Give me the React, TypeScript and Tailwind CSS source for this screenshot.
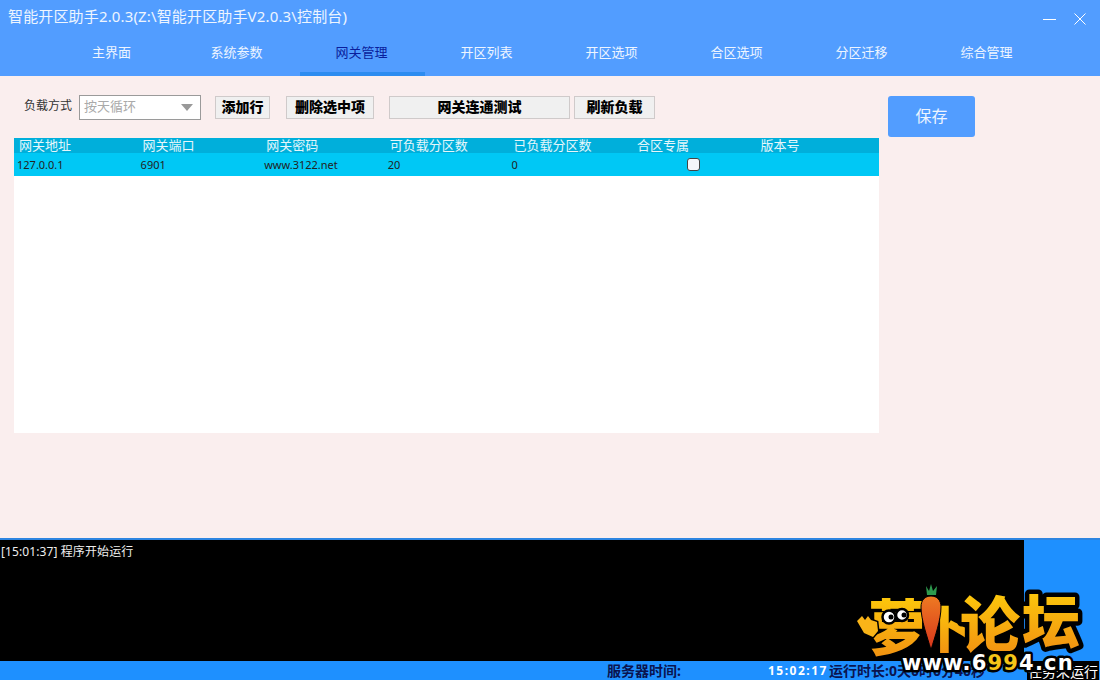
const font = { fontFamily: '"Noto Sans", "Noto Sans CJK SC", sans-serif' };

const tabs = ["主界面", "系统参数", "网关管理", "开区列表", "开区选项", "合区选项", "分区迁移", "综合管理"];
const columns = ["网关地址", "网关端口", "网关密码", "可负载分区数", "已负载分区数", "合区专属", "版本号"];

const ToolButton = ({ label, width }: { label: string; width: string }) => (
  <button className={`${width} h-[23px] bg-[#f0f0f0] border border-[#cfcaca] text-[14px] font-black text-black leading-none`}>
    {label}
  </button>
);

const Logo = () => (
  <svg className="absolute right-0 bottom-0" width="250" height="102" viewBox="850 578 250 102">
    <defs>
      <linearGradient id="gold" x1="0" y1="0" x2="0" y2="1">
        <stop offset="0" stopColor="#ffd60a" />
        <stop offset="1" stopColor="#f08a12" />
      </linearGradient>
      <linearGradient id="carrot" x1="0" y1="0" x2="0" y2="1">
        <stop offset="0" stopColor="#ee7a22" />
        <stop offset="1" stopColor="#d8341c" />
      </linearGradient>
    </defs>
    <g
      fontFamily='"Noto Sans CJK SC", sans-serif'
      fontWeight="900"
      fill="url(#gold)"
      stroke="#000"
      strokeWidth="9"
      strokeLinejoin="round"
      style={{ paintOrder: "stroke" }}
    >
      <text x="868" y="650" fontSize="60">萝</text>
      <text x="924" y="648" fontSize="50">卜</text>
      <text x="960" y="647" fontSize="60">论</text>
      <text x="1022" y="643" fontSize="58">坛</text>
    </g>
    <path
      d="M857 621l5 -5 3 4 3 -4 3 4 6 2 1 9 -5 6 -9 -4z"
      fill="#f9b418"
      stroke="#000"
      strokeWidth="3"
      paintOrder="stroke"
    />
    <path d="M926 586l3 5 2 -7 2 7 4 -5 -1 9h-9z" fill="#2e9a4e" />
    <path d="M931 650c-4 -14 -10 -30 -10 -43 0 -7 4 -11 10 -11s10 4 10 11c0 13 -6 29 -10 43z" fill="url(#carrot)" stroke="#000" strokeWidth="1" />
    <circle cx="889" cy="617" r="6.5" fill="#fff" stroke="#000" strokeWidth="2.5" />
    <circle cx="902" cy="615" r="6" fill="#fff" stroke="#000" strokeWidth="2.5" />
    <circle cx="891" cy="617" r="2.5" fill="#000" />
    <circle cx="904" cy="615" r="2.5" fill="#000" />
    <text
      x="902"
      y="670"
      fontFamily='"DejaVu Sans", sans-serif'
      fontWeight="700"
      fontSize="21"
      letterSpacing="1.2"
      fill="#fff"
      stroke="#000"
      strokeWidth="5"
      strokeLinejoin="round"
      style={{ paintOrder: "stroke" }}
    >
      www.6<tspan fill="#f5c518">99</tspan>4.cn
    </text>
  </svg>
);

export default function App() {
  return (
    <div className="relative w-[1100px] h-[680px] overflow-hidden flex flex-col bg-[#faeeee]" style={font}>
      <div className="h-[76px] bg-[#529dff] flex flex-col shrink-0">
        <div className="h-[38px] flex items-center justify-between pl-2">
          <span className="text-[15px] tracking-[0.15px] leading-none pb-[5px] text-white/90">智能开区助手2.0.3(Z:\智能开区助手V2.0.3\控制台)</span>
          <div className="flex items-center gap-[18px] pr-[14px]">
            <svg width="13" height="12" viewBox="0 0 13 12" stroke="#fff" fill="none">
              <path d="M0 6.5h13" />
            </svg>
            <svg width="12" height="12" viewBox="0 0 12 12" stroke="#fff" fill="none">
              <path d="M0.5 0.5l11 11M11.5 0.5l-11 11" />
            </svg>
          </div>
        </div>
        <div className="h-[38px] flex pl-[49px]">
          {tabs.map((tab, idx) => (
            <div
              key={tab}
              className={
                idx === 2
                  ? "w-[125px] ml-[1px] -mr-[1px] flex items-center justify-center pb-[4px] pr-[2px] text-[13px] text-[#0a1e9c] border-b-4 border-[#2d8cf0]"
                  : "w-[125px] flex items-center justify-center pb-[4px] text-[13px] text-white/90 border-b-4 border-transparent"
              }
            >
              {tab}
            </div>
          ))}
        </div>
      </div>

      <div className="flex-1 flex pl-[14px]">
        <div className="w-[865px] flex flex-col">
          <div className="h-[62px] flex items-center gap-[14px] pl-[10px]">
            <div className="flex items-center gap-[7px]">
              <span className="text-[12px] leading-none pb-[3px] text-[#333]">负载方式</span>
              <div className="w-[122px] h-[25px] bg-white border border-[#9a9a9a] flex items-center justify-between pl-1 pr-[7px]">
                <span className="text-[13px] text-[#aaa]">按天循环</span>
                <span className="w-0 h-0 border-x-[6px] border-x-transparent border-t-[7px] border-t-[#999]" />
              </div>
            </div>
            <ToolButton label="添加行" width="w-[55px]" />
            <ToolButton label="删除选中项" width="w-[88px] ml-[2px]" />
            <ToolButton label="网关连通测试" width="w-[181px] ml-[1px] -mr-[10px]" />
            <ToolButton label="刷新负载" width="w-[81px]" />
          </div>
          <div className="h-[295px] bg-white">
            <div className="h-[15px] bg-[#00afdb] grid grid-cols-[repeat(7,123.6px)]">
              {columns.map((col) => (
                <span key={col} className="pl-[5px] text-[13px] leading-[15px] text-white/90">{col}</span>
              ))}
            </div>
            <div className="h-[23px] bg-[#00c8f5] grid grid-cols-[repeat(7,123.6px)] items-center text-[11px] text-[#222]">
              <span className="pl-[3px] pt-[2px]">127.0.0.1</span>
              <span className="pl-[3px] pt-[2px]">6901</span>
              <span className="pl-[3px] pt-[2px]">www.3122.net</span>
              <span className="pl-[3px] pt-[2px]">20</span>
              <span className="pl-[3px] pt-[2px]">0</span>
              <span className="flex justify-center pb-[1px]">
                <span className="w-[13px] h-[13px] rounded-[3px] bg-[#f4f6fa] border border-[#444]" />
              </span>
              <span />
            </div>
          </div>
        </div>
        <div className="pl-[9px] pt-[20px]">
          <button className="w-[87px] h-[41px] rounded-[3px] bg-[#529dff] pb-[2px] text-[16px] text-white/90">保存</button>
        </div>
      </div>

      <div className="h-[142px] shrink-0 border-t-2 border-[#2d84e0] bg-[#1e90ff] flex flex-col">
        <div className="w-[1024px] h-[121px] shrink-0 bg-black pl-[1px] pt-[3px] text-[12px] tracking-[0.1px] text-[#eee]">
          [15:01:37] 程序开始运行
        </div>
        <div className="h-[19px] flex items-center text-[14px] font-bold text-[#0a1450] leading-none">
          <span className="ml-[607px] w-[161px]">服务器时间:</span>
          <span className="w-[61px] text-[12px] text-white tracking-[1.5px]">15:02:17</span>
          <span className="w-[198px] whitespace-nowrap">运行时长:0天0时0分40秒</span>
          <span className="w-[72px] h-full bg-black text-white font-normal text-center pt-[4px] whitespace-nowrap">任务未运行</span>
        </div>
      </div>

      <Logo />
    </div>
  );
}
